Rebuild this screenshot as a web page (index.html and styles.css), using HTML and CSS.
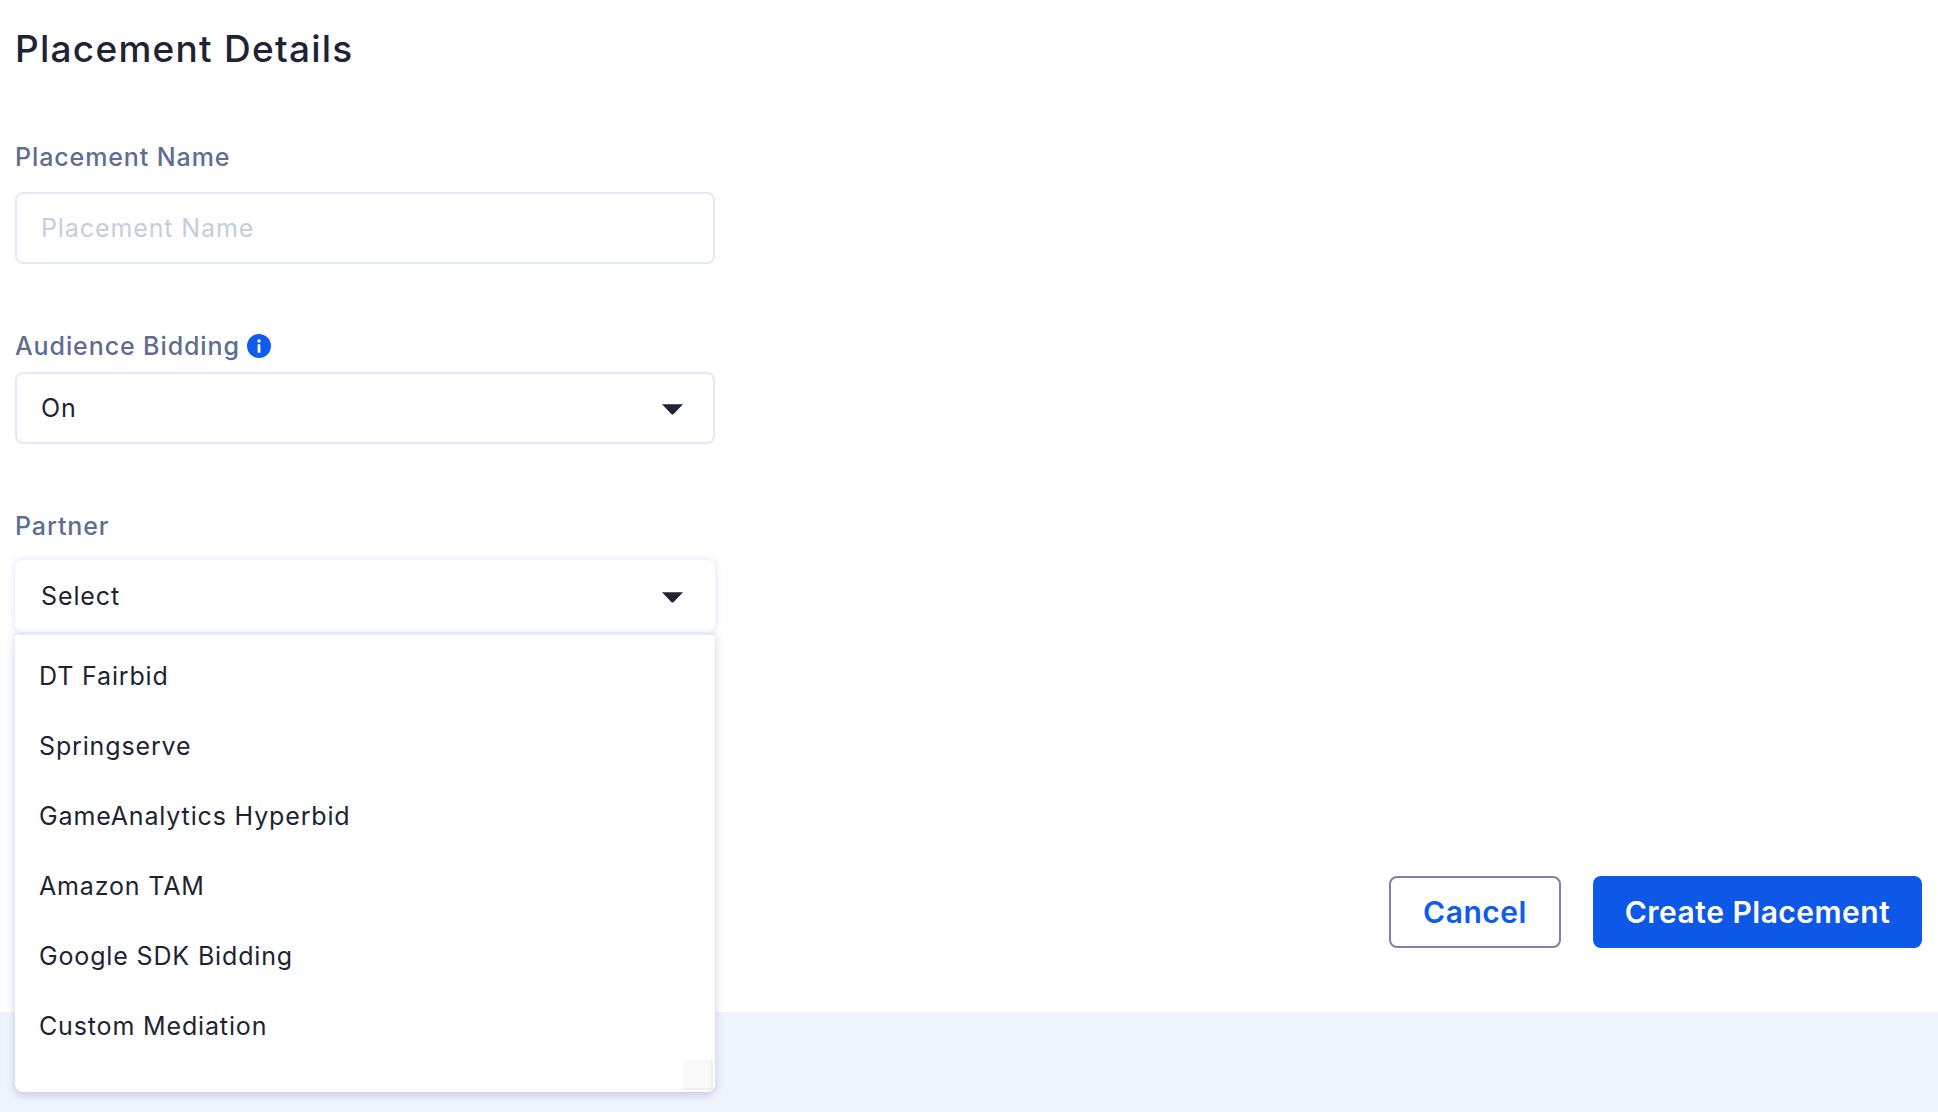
FILE: index.html
```html
<!DOCTYPE html>
<html lang="en">
<head>
  <meta charset="UTF-8">
  <meta name="viewport" content="width=device-width, initial-scale=1.0">
  <title>Placement Details</title>
  <link rel="stylesheet" href="styles.css">
</head>
<body>
  <div class="panel">
    <h2>Placement Details</h2>

    <!-- Form fields -->
    <div class="form-group name-group">
      <label for="placementName">Placement Name</label>
      <input type="text" id="placementName" placeholder="Placement Name">
    </div>
    <div class="form-group bidding-group">
      <label>Audience Bidding
        <svg class="info" viewBox="0 0 24 24" aria-hidden="true">
          <circle cx="12" cy="12" r="12" fill="#0f5bf0"/>
          <circle cx="12" cy="7" r="1.7" fill="#fff"/>
          <rect x="10.6" y="10.2" width="2.8" height="8.6" rx="0.6" fill="#fff"/>
        </svg>
      </label>
      <div class="select">
        <span>On</span>
        <svg class="arrow" viewBox="0 0 22 11" aria-hidden="true"><path d="M0 0H22L12 10.4Q11 11.2 10 10.4Z"/></svg>
      </div>
    </div>
    <div class="form-group partner-group">
      <label>Partner</label>
      <div class="select open">
        <span>Select</span>
        <svg class="arrow" viewBox="0 0 22 11" aria-hidden="true"><path d="M0 0H22L12 10.4Q11 11.2 10 10.4Z"/></svg>
      </div>
      <div class="menu">
        <div class="menu-item">DT Fairbid</div>
        <div class="menu-item">Springserve</div>
        <div class="menu-item">GameAnalytics Hyperbid</div>
        <div class="menu-item">Amazon TAM</div>
        <div class="menu-item">Google SDK Bidding</div>
        <div class="menu-item">Custom Mediation</div>
        <div class="corner"></div>
      </div>
    </div>

    <!-- Actions -->
    <div class="actions">
      <button class="btn btn-cancel">Cancel</button>
      <button class="btn btn-primary">Create Placement</button>
    </div>
  </div>
  <div class="page-bottom"></div>
</body>
</html>
```

FILE: styles.css
```css
* {
  box-sizing: border-box;
}
html, body {
  margin: 0;
  height: 100%;
}
body {
  display: flex;
  flex-direction: column;
  height: 1112px;
  overflow: hidden;
  font-family: Inter, "Noto Sans", sans-serif;
  background-color: #f0f4fd;
}
.panel {
  height: 1012px;
  padding: 0 16px 0 15px;
  background-color: #fff;
  display: flex;
  flex-direction: column;
}
.page-bottom {
  flex: 1;
}
h2 {
  margin: 27px 0 0;
  font-size: 37px;
  line-height: 44px;
  font-weight: 500;
  letter-spacing: 1.25px;
  color: #1d2433;
}
.form-group {
  width: 700px;
}
.form-group label {
  display: flex;
  align-items: center;
  gap: 7px;
  height: 30px;
  font-size: 25px;
  font-weight: 500;
  letter-spacing: 0.9px;
  color: #5f6d92;
}
.name-group {
  margin-top: 71px;
}
.bidding-group {
  margin-top: 67px;
}
.partner-group {
  margin-top: 67px;
  position: relative;
}
.name-group label {
  margin-bottom: 20px;
}
.bidding-group label {
  margin-bottom: 11px;
}
.partner-group label {
  margin-bottom: 19px;
}
.info {
  width: 24px;
  height: 24px;
}
input, .select {
  display: flex;
  align-items: center;
  width: 100%;
  height: 72px;
  padding: 0 30px 0 24px;
  border: 2px solid #e1eafa;
  border-radius: 8px;
  font-family: inherit;
  font-size: 25px;
  letter-spacing: 0.9px;
  color: #1d2433;
  background-color: #fff;
}
input::placeholder {
  color: #c5cddf;
  opacity: 1;
}
.select {
  justify-content: space-between;
}
.select.open {
  border: none;
  padding-left: 26px;
  padding-right: 32px;
  box-shadow: 0 0 8px rgba(70, 100, 170, 0.18);
}
.arrow {
  width: 21px;
  height: 11px;
  margin-top: 3px;
  fill: #1d2433;
}
.menu {
  position: absolute;
  top: 122px;
  left: 0;
  width: 100%;
  height: 459px;
  padding-top: 6px;
  background-color: #fff;
  border-top: 2px solid #e1eafa;
  border-radius: 0 0 8px 8px;
  box-shadow: 0 3px 10px rgba(70, 90, 140, 0.28);
}
.menu-item {
  display: flex;
  align-items: center;
  height: 70px;
  padding-left: 24px;
  font-size: 25px;
  letter-spacing: 0.85px;
  color: #1d2433;
}
.corner {
  position: absolute;
  right: 2px;
  bottom: 2px;
  width: 30px;
  height: 30px;
  background-color: #f9f9f9;
  border-right: 2px solid #efefef;
  border-bottom: 2px solid #efefef;
}
.actions {
  display: flex;
  justify-content: flex-end;
  gap: 32px;
  margin-top: auto;
  margin-bottom: 64px;
}
.btn {
  height: 72px;
  border-radius: 8px;
  font-family: inherit;
  font-size: 30px;
  font-weight: 600;
  letter-spacing: 0.5px;
  cursor: pointer;
}
.btn-cancel {
  width: 172px;
  border: 2px solid #7684a8;
  background-color: #fff;
  color: #0f5bf0;
}
.btn-primary {
  width: 329px;
  border: none;
  background-color: #0d58e6;
  color: #fff;
}
```
